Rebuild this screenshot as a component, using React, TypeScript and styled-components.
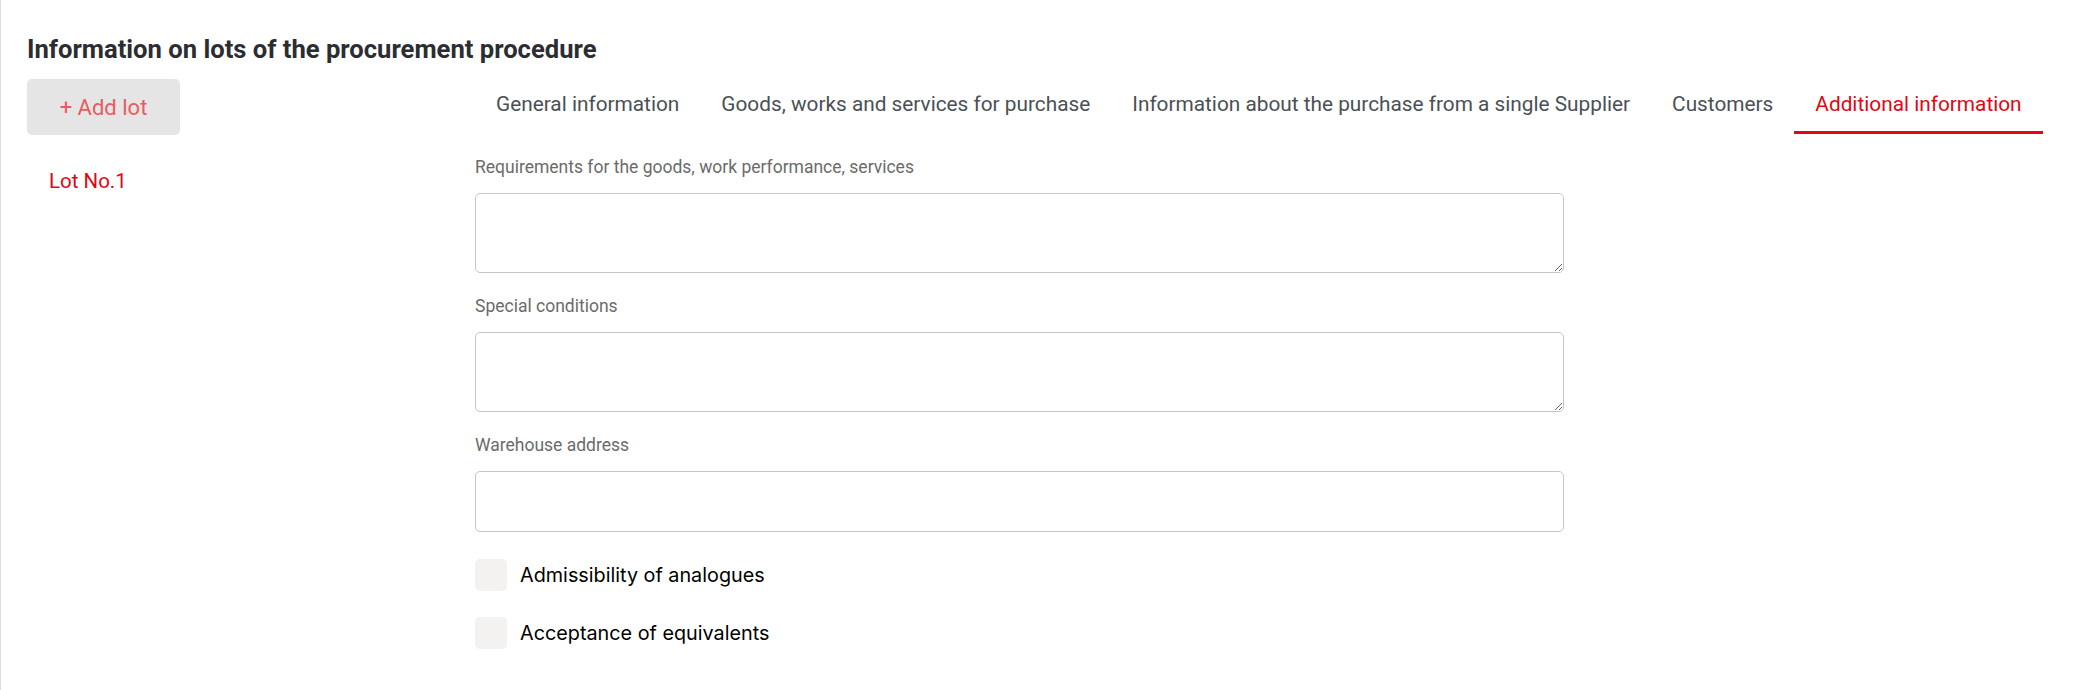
import React, { useState } from "react";
import styled, { createGlobalStyle } from "styled-components";

const GlobalStyle = createGlobalStyle`
  body {
    margin: 0;
    background: #ffffff;
    font-family: Roboto, "Noto Sans", sans-serif;
  }
  * {
    box-sizing: border-box;
  }
`;

const tabs = [
  "General information",
  "Goods, works and services for purchase",
  "Information about the purchase from a single Supplier",
  "Customers",
  "Additional information",
];

const App = () => {
  const [activeTab, setActiveTab] = useState(4);
  const [form, setForm] = useState({
    requirements: "",
    conditions: "",
    address: "",
    analogues: false,
    equivalents: false,
  });

  return (
    <Page>
      <GlobalStyle />
      <Title>Information on lots of the procurement procedure</Title>
      <Layout>
        <Sidebar>
          <AddButton>+ Add lot</AddButton>
          <LotLink>Lot No.1</LotLink>
        </Sidebar>
        <Main>
          <Tabs>
            {tabs.map((tab, i) => (
              <Tab key={tab} $active={i === activeTab} onClick={() => setActiveTab(i)}>
                {tab}
              </Tab>
            ))}
          </Tabs>
          <Form>
            <Field>
              <Label>Requirements for the goods, work performance, services</Label>
              <TextArea
                value={form.requirements}
                onChange={(e) => setForm({ ...form, requirements: e.target.value })}
              />
            </Field>
            <Field>
              <Label>Special conditions</Label>
              <TextArea
                value={form.conditions}
                onChange={(e) => setForm({ ...form, conditions: e.target.value })}
              />
            </Field>
            <Field>
              <Label>Warehouse address</Label>
              <Input
                value={form.address}
                onChange={(e) => setForm({ ...form, address: e.target.value })}
              />
            </Field>
            <Checks>
              <CheckRow>
                <CheckBox
                  $checked={form.analogues}
                  onClick={() => setForm({ ...form, analogues: !form.analogues })}
                />
                <CheckText>Admissibility of analogues</CheckText>
              </CheckRow>
              <CheckRow>
                <CheckBox
                  $checked={form.equivalents}
                  onClick={() => setForm({ ...form, equivalents: !form.equivalents })}
                />
                <CheckText>Acceptance of equivalents</CheckText>
              </CheckRow>
            </Checks>
          </Form>
        </Main>
      </Layout>
    </Page>
  );
};

const Page = styled.div`
  min-height: 690px;
  border-left: 1px solid #dddddd;
  padding: 35px 40px 0 26px;
`;

const Title = styled.h2`
  margin: 0 0 16px;
  font-family: Roboto, sans-serif;
  font-weight: 700;
  font-size: 25.6px;
  line-height: 28px;
  color: #2c2d33;
`;

const Layout = styled.div`
  display: grid;
  grid-template-columns: 448px 1fr;
`;

const Sidebar = styled.div`
  display: flex;
  flex-direction: column;
  align-items: flex-start;
`;

const AddButton = styled.button`
  width: 153px;
  height: 56px;
  border: none;
  border-radius: 5px;
  background: #e5e5e5;
  color: #ec5a60;
  font-family: Roboto, sans-serif;
  font-size: 22px;
  cursor: pointer;
`;

const LotLink = styled.div`
  margin-top: 35px;
  padding-left: 22px;
  color: #e30613;
  font-family: Roboto, sans-serif;
  font-size: 20.5px;
  line-height: 23px;
  cursor: pointer;
`;

const Main = styled.div`
  display: flex;
  flex-direction: column;
`;

const Tabs = styled.div`
  display: flex;
`;

const Tab = styled.div<{ $active?: boolean }>`
  height: 55px;
  display: flex;
  align-items: center;
  padding: 0 21px 2px;
  border-bottom: 3px solid ${(p) => (p.$active ? "#e30613" : "transparent")};
  color: ${(p) => (p.$active ? "#e30613" : "#4b5055")};
  font-family: Roboto, sans-serif;
  font-size: 20.8px;
  white-space: nowrap;
  cursor: pointer;
`;

const Form = styled.div`
  width: 1089px;
  margin-top: 24px;
  display: flex;
  flex-direction: column;
  gap: 24px;
`;

const Field = styled.div`
  display: flex;
  flex-direction: column;
`;

const Label = styled.label`
  margin-bottom: 16px;
  color: #6b6b6b;
  font-family: Roboto, sans-serif;
  font-size: 17.5px;
  line-height: 19px;
`;

const TextArea = styled.textarea`
  width: 100%;
  height: 80px;
  padding: 10px 14px;
  border: 1px solid #c6c6c6;
  border-radius: 5px;
  font-family: Roboto, sans-serif;
  font-size: 16px;
  resize: vertical;
  outline: none;
`;

const Input = styled.input`
  width: 100%;
  height: 61px;
  padding: 0 14px;
  border: 1px solid #c6c6c6;
  border-radius: 5px;
  font-family: Roboto, sans-serif;
  font-size: 16px;
  outline: none;
`;

const Checks = styled.div`
  margin-top: 3px;
  display: flex;
  flex-direction: column;
  gap: 26px;
`;

const CheckRow = styled.label`
  display: flex;
  align-items: center;
  gap: 13px;
  cursor: pointer;
`;

const CheckBox = styled.span<{ $checked?: boolean }>`
  width: 32px;
  height: 32px;
  flex-shrink: 0;
  border-radius: 5px;
  background: ${(p) => (p.$checked ? "#e30613" : "#f3f2f0")};
`;

const CheckText = styled.span`
  color: #000000;
  font-family: Inter, "Liberation Sans", sans-serif;
  font-size: 19.8px;
  line-height: 24px;
`;

export default App;
